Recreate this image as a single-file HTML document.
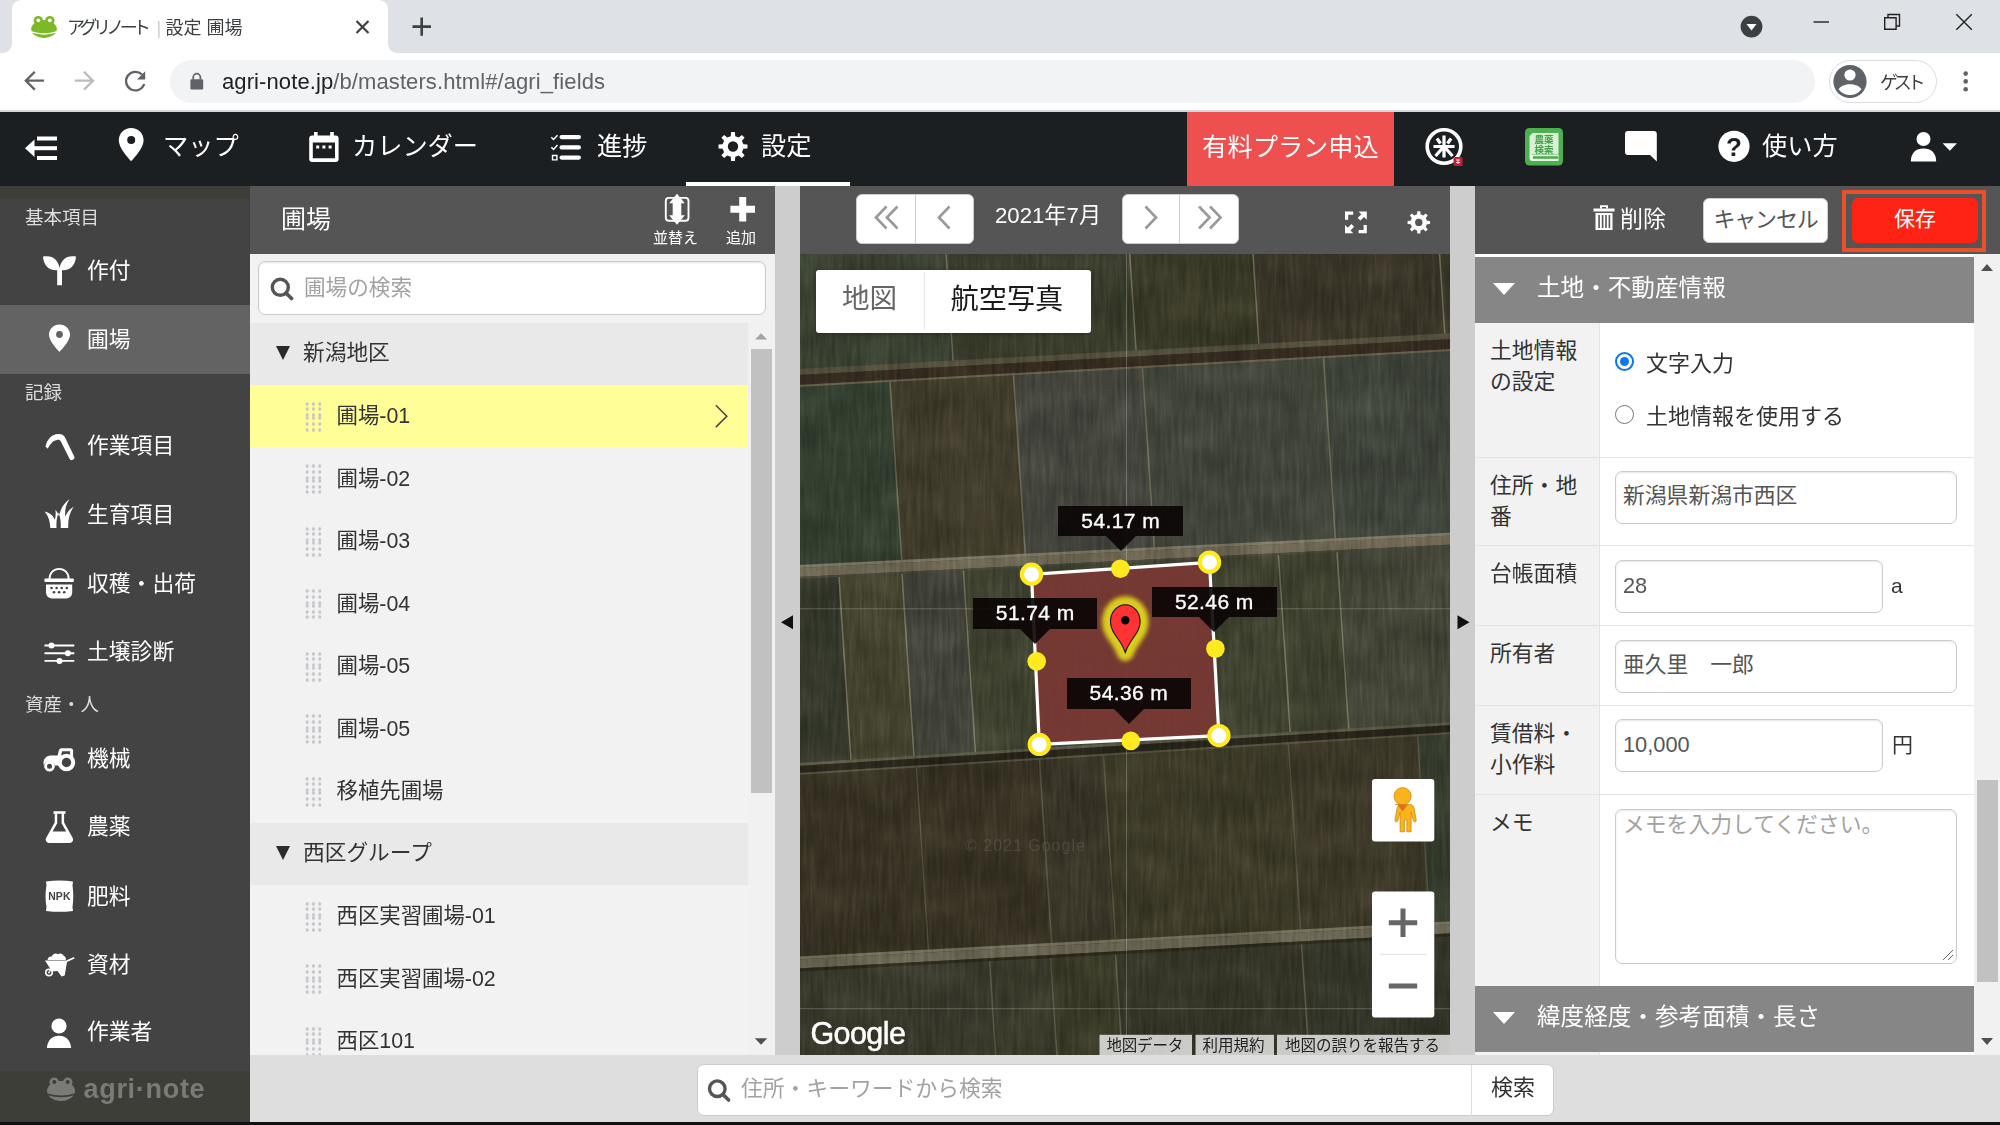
<!DOCTYPE html>
<html lang="ja">
<head>
<meta charset="utf-8">
<title>アグリノート | 設定 圃場</title>
<style>
*{box-sizing:border-box;margin:0;padding:0}
html,body{width:2000px;height:1125px;overflow:hidden;background:#fff}
body{font-family:"Liberation Sans","Noto Sans CJK JP",sans-serif;color:#333;position:relative}
.abs{position:absolute}
svg{display:block}
/* ---------- browser chrome ---------- */
#tabstrip{left:0;top:0;width:2000px;height:53px;background:#dee1e6}
#tab{left:12px;top:0;width:376px;height:53px;background:#fff;border-radius:9px 9px 0 0}
#tab:before,#tab:after{content:"";position:absolute;bottom:0;width:9px;height:9px;background:radial-gradient(circle at 0 0,transparent 8.5px,#fff 9px)}
#tab:before{left:-9px}
#tab:after{right:-9px;transform:scaleX(-1)}
#tabtitle{left:67px;top:14px;font-size:18px;color:#3c4043;white-space:nowrap;line-height:28px}
#toolbar{left:0;top:53px;width:2000px;height:57px;background:#fff}
#tbline{left:0;top:110px;width:2000px;height:2px;background:#d6d8db}
#omni{left:170px;top:60px;width:1645px;height:43px;border-radius:22px;background:#f1f3f4}
#url{left:222px;top:69px;font-size:22px;color:#5f6368;white-space:nowrap;letter-spacing:0.1px}
#url b{font-weight:normal;color:#202124}
#guest{left:1829px;top:60px;width:108px;height:43px;border-radius:22px;border:1px solid #dadce0;background:#fff}
#guest span{position:absolute;left:50px;top:8px;font-size:18px;color:#3c4043;letter-spacing:-4.3px;white-space:nowrap;line-height:28px}
/* ---------- app nav ---------- */
#nav{left:0;top:112px;width:2000px;height:74px;background:#1c1f22;color:#fff}
.navt{position:absolute;top:15px;font-size:25.2px;color:#fff;white-space:nowrap;line-height:38px}
#paid{left:1187px;top:112px;width:207px;height:74px;background:#ee504f;color:#fff;font-size:25.2px;line-height:70px;text-align:center;white-space:nowrap}
#navul{left:686px;top:182px;width:164px;height:4px;background:#fff}
/* ---------- sidebar ---------- */
#side{left:0;top:186px;width:250px;height:936.500px;background:#434343;color:#fff}
#sidetop{left:0;top:0;width:250px;height:13px;background:#3c3e37}
.sh{position:absolute;left:25px;margin-top:1px;font-size:18.500px;color:#ddd;white-space:nowrap;line-height:24px}
.si{position:absolute;left:87px;margin-top:1.500px;font-size:21.800px;color:#fff;white-space:nowrap;line-height:30px}
#sideact{left:0;top:119px;width:250px;height:69px;background:#636363}
#sidebot{left:0;top:885px;width:250px;height:52px;background:#3c3e37}
#logo{left:83.500px;top:887.500px;font-size:27px;font-weight:bold;color:#7a7b76;letter-spacing:.7px;white-space:nowrap}
/* ---------- list panel ---------- */
#list{left:250px;top:186px;width:525px;height:869px;background:#f2f2f2}
#listhd{left:0;top:0;width:525px;height:68px;background:#555}
#listhd .t{position:absolute;left:31px;top:16px;font-size:25px;color:#fff;line-height:34px}
.hbtn{position:absolute;font-size:15px;color:#fff;white-space:nowrap;line-height:18px}
#fsearch{left:8px;top:75px;width:508px;height:54px;border:1px solid #ccc;border-radius:7px;background:#fff;box-shadow:inset 0 1px 2px rgba(0,0,0,.1)}
#fsearch span{position:absolute;left:45px;top:11px;font-size:21.600px;color:#a2a2a2;line-height:30px}
.grp{position:absolute;left:0;width:498px;height:62px;background:#e9e9e9}
.grp span{position:absolute;left:53px;top:15.500px;font-size:21.700px;color:#333;line-height:30px;white-space:nowrap}
.grp i{position:absolute;left:26px;top:23.500px;width:0;height:0;border-left:7.300px solid transparent;border-right:7.300px solid transparent;border-top:14px solid #2b2b2b}
.it{position:absolute;left:0;width:498px;height:62px}
.it span{position:absolute;left:86.500px;top:16px;font-size:21.400px;color:#333;line-height:30px;white-space:nowrap}
.it i{position:absolute;left:53.600px;top:15.600px;width:18.900px;height:32px;background-image:radial-gradient(circle,#c6c6cc 1.500px,transparent 1.900px),radial-gradient(circle,#c6c6cc 1.500px,transparent 1.900px),radial-gradient(circle,#c6c6cc 1.500px,transparent 1.900px),radial-gradient(circle,#c6c6cc 1.500px,transparent 1.900px),radial-gradient(circle,#c6c6cc 1.500px,transparent 1.900px),radial-gradient(circle,#c6c6cc 1.500px,transparent 1.900px);background-size:6.300px 5.600px;background-repeat:repeat-x;background-position:0 0.0px,0 5.6px,0 11.2px,0 14.6px,0 20.4px,0 26.0px}
.it.sel{background:#fffe97}
#lsb{left:498px;top:136px;width:26.500px;height:733px;background:#f1f1f1}
#lsbthumb{left:2.500px;top:27px;width:21px;height:443.500px;background:#c1c1c1}
/* ---------- splitters ---------- */
.split{background:#cdcdcd}
/* ---------- map ---------- */
#maphd{left:800px;top:186px;width:650px;height:68px;background:#555}
.pg{position:absolute;top:8px;height:49.500px;background:#fff;border-radius:6px;border:1px solid #ccc}
#map{left:800px;top:254px;width:650px;height:801px;background:#3d3d2c;overflow:hidden}
.lbl{position:absolute;height:30.600px;background:rgba(10,4,4,.9);color:#fff;font-size:21px;letter-spacing:.4px;line-height:30px;text-align:center;white-space:nowrap;font-family:"Liberation Sans",sans-serif;-webkit-text-stroke:.35px #fff}
.lbl:after{content:"";position:absolute;top:30.600px;left:47.300px;border-left:15px solid transparent;border-right:15px solid transparent;border-top:15px solid rgba(10,4,4,.9)}
/* ---------- right panel ---------- */
#rp{left:1475px;top:186px;width:525px;height:869px;background:#fff}
#rphd{left:0;top:0;width:525px;height:68px;background:#555}
.sec{position:absolute;left:0;width:499px;height:62px;background:#868686;color:#fff;font-size:23.6px;line-height:62px;white-space:nowrap}
.sec span{position:absolute;left:62px;top:0}
.sec i{position:absolute;left:18px;top:26px;width:0;height:0;border-left:11px solid transparent;border-right:11px solid transparent;border-top:12px solid #fff}
.row{position:absolute;left:0;width:499px;border-bottom:1px solid #e3e3e3;background:#fff}
.row .l{position:absolute;left:0;top:0;bottom:0;width:125px;background:#f2f2f2;border-right:1px solid #e3e3e3;font-size:21.8px;line-height:31px;color:#333;padding:12px 0 0 15px}
.inp{position:absolute;left:140px;height:53px;border:1px solid #ccc;border-radius:7px;background:#fff;box-shadow:inset 0 1px 2px rgba(0,0,0,.1);font-size:21.8px;line-height:47px;padding-left:7px;color:#555;white-space:nowrap}
.unit{position:absolute;font-size:21px;color:#333;line-height:30px}
#rsb{left:499px;top:68px;width:26px;height:801px;background:#f1f1f1}
/* ---------- bottom ---------- */
#bottom{left:250px;top:1055px;width:1750px;height:67.500px;background:#dedede}
#black{left:0;top:1122.300px;width:2000px;height:3px;background:#111}
#bsearch{left:697px;top:1064px;width:857px;height:52px;background:#fff;border:1px solid #ccc;border-radius:7px}
</style>
</head>
<body>
<!-- CHROME -->
<div id="tabstrip" class="abs"></div>
<div id="tab" class="abs"></div>
<div id="tabtitle" class="abs"><span style="letter-spacing:-4.6px">アグリノート</span><span style="color:#a9a; display:inline-block;width:14px;text-align:center;margin-left:5px;transform:scaleX(.5)">|</span>設定 圃場</div>
<div id="toolbar" class="abs"></div>
<div id="tbline" class="abs"></div>
<div id="omni" class="abs"></div>
<div id="url" class="abs"><b>agri-note.jp</b>/b/masters.html#/agri_fields</div>
<div id="guest" class="abs"><span>ゲスト</span></div>

<svg class="abs" style="left:0;top:0" width="2000" height="112" viewBox="0 0 2000 112">
<!-- frog favicon -->
<g fill="#7bb929"><circle cx="38.3" cy="20.6" r="4.7"/><circle cx="49.8" cy="20.6" r="4.7"/><ellipse cx="44" cy="29" rx="12.8" ry="9"/></g>
<circle cx="38.3" cy="20.3" r="1.9" fill="#fff"/><circle cx="49.8" cy="20.3" r="1.9" fill="#fff"/>
<path d="M31.6 31.2 Q44 35.4 56.4 31.2 L56.6 32.6 Q44 36.8 31.4 32.6Z" fill="#fff"/>
<!-- tab close / new tab -->
<path d="M356.5 21l12 12M368.5 21l-12 12" stroke="#3c4043" stroke-width="2.2" fill="none"/>
<path d="M412.5 26.6h18.5M421.7 17.5v18.3" stroke="#3c4043" stroke-width="2.6" fill="none"/>
<!-- window controls -->
<circle cx="1751.5" cy="26.6" r="10.9" fill="#3c4043"/><path d="M1746.5 24h10l-5 6.5z" fill="#fff"/>
<path d="M1813.5 22h15.5" stroke="#222" stroke-width="1.4"/>
<path d="M1884.7 17.8h11.4v11.4h-11.4zM1888 17.5v-3h11.5v11.5h-3" stroke="#222" stroke-width="1.4" fill="none"/>
<path d="M1956.3 14.3l15.5 15.5M1971.8 14.3l-15.5 15.5" stroke="#222" stroke-width="1.4" fill="none"/>
<!-- back / forward / reload -->
<path d="M44 80.7H26.5M34.8 71.8l-9 8.9 9 8.9" stroke="#5f6368" stroke-width="2.3" fill="none"/>
<path d="M74.8 80.7h17.5M84 71.8l9 8.9-9 8.9" stroke="#b9bbbe" stroke-width="2.3" fill="none"/>
<path d="M141.8 74.4a9.3 9.3 0 1 0 2.4 9.6" stroke="#5f6368" stroke-width="2.3" fill="none"/><path d="M145.2 71.3v8.2h-8.2z" fill="#5f6368"/>
<!-- lock -->
<rect x="190.4" y="79.3" width="12.8" height="10.2" rx="1.3" fill="#5f6368"/><path d="M193.2 79.5v-2.2a3.6 3.6 0 0 1 7.2 0v2.2" stroke="#5f6368" stroke-width="1.7" fill="none"/>
<!-- avatar -->
<circle cx="1850" cy="81.5" r="16.6" fill="#5f6368"/><circle cx="1850" cy="75" r="5.6" fill="#fff"/><path d="M1838.6 89.2c2.2-3.6 7-5 11.4-5s9.2 1.4 11.4 5a14 14 0 0 1-22.8 0z" fill="#fff"/>
<!-- menu dots -->
<g fill="#5f6368"><circle cx="1965.7" cy="73.6" r="2.3"/><circle cx="1965.7" cy="81.4" r="2.3"/><circle cx="1965.7" cy="89.2" r="2.3"/></g>
</svg>

<!-- NAV -->
<div id="nav" class="abs">
<div class="navt" style="left:163px">マップ</div>
<div class="navt" style="left:352px">カレンダー</div>
<div class="navt" style="left:597px">進捗</div>
<div class="navt" style="left:761px">設定</div>
<div class="navt" style="left:1762px">使い方</div>
</div>
<div id="paid" class="abs">有料プラン申込</div>
<div id="navul" class="abs"></div>

<svg class="abs" style="left:0;top:112px" width="2000" height="74" viewBox="0 112 2000 74">
<g fill="#fff">
<!-- menu collapse -->
<rect x="37" y="136.5" width="20" height="4"/><rect x="32" y="146.2" width="25" height="4"/><rect x="37" y="156" width="20" height="4"/><path d="M25 148.2l9.5-8.7v17.4z"/>
<!-- pin -->
<path d="M131.2 128c-6.9 0-12.4 5.4-12.4 12.2 0 8.6 12.4 21 12.4 21s12.4-12.4 12.4-21c0-6.800-5.500-12.200-12.400-12.200zm0 8a4 4 0 1 1 0 8 4 4 0 0 1 0-8z" fill-rule="evenodd"/>
<!-- calendar -->
<path d="M314 132h3.600v3.500h12.600v-3.500h3.600v3.500h1.800a3 3 0 0 1 3 3v20.500a3 3 0 0 1-3 3h-23.400a3 3 0 0 1-3-3v-20.500a3 3 0 0 1 3-3h1.800zM312.800 142.500v15.800h22.200v-15.800zM316.200 145.600h3v3h-3zM322.400 145.600h3v3h-3zM328.600 145.600h3v3h-3z" fill-rule="evenodd"/>
<!-- tasks -->
<rect x="559.500" y="135" width="21.500" height="4.200" rx="2.100"/><rect x="559.500" y="145.300" width="21.500" height="4.200" rx="2.100"/><rect x="559.500" y="155.500" width="21.500" height="4.200" rx="2.100"/>
<path d="M551.800 154.800h5.800v5.800h-5.800zM553.200 156.200v3h3v-3z" fill-rule="evenodd"/>
</g>
<path d="M551.300 137.300l2.200 2.200 4-4.300M551.300 147.200l2.200 2.200 4-4.300" stroke="#fff" stroke-width="1.500" fill="none"/>
<!-- gear -->
<path d="M747.47 144.56 L747.47 148.44 L743.36 148.73 L741.90 152.25 L744.61 155.36 L741.86 158.11 L738.75 155.40 L735.23 156.86 L734.94 160.97 L731.06 160.97 L730.77 156.86 L727.25 155.40 L724.14 158.11 L721.39 155.36 L724.10 152.25 L722.64 148.73 L718.53 148.44 L718.53 144.56 L722.64 144.27 L724.10 140.75 L721.39 137.64 L724.14 134.89 L727.25 137.60 L730.77 136.14 L731.06 132.03 L734.94 132.03 L735.23 136.14 L738.75 137.60 L741.86 134.89 L744.61 137.64 L741.90 140.75 L743.36 144.27Z M727.80 146.50 a5.20 5.20 0 1 0 10.40 0 a5.20 5.20 0 1 0 -10.40 0Z" fill="#fff" fill-rule="evenodd"/>
<!-- rice -->
<circle cx="1444" cy="146.500" r="16.800" fill="none" stroke="#fff" stroke-width="3.600"/>
<g stroke="#fff" stroke-width="3.200" fill="none"><path d="M1444 135.500v22M1433.500 146.500h21M1437 138.500l3.500 5M1451 138.500l-3.500 5M1443 147.500l-7.500 8.500M1445 147.500l7.500 8.500"/></g>
<rect x="1453.500" y="157" width="9" height="9" rx="1.500" fill="#c6202e"/><path d="M1456 160h4M1456 162.500h4M1458 159v5" stroke="#fff" stroke-width=".8"/>
<!-- book -->
<rect x="1525" y="128" width="38" height="37.500" rx="4.500" fill="#4caf50"/>
<path d="M1532.500 133h26v21h-26l-3 3v-21z" fill="#d9f0d5"/><path d="M1529.500 157.500a3 3 0 0 1 3-3h26v6.500h-26a3 3 0 0 1-3-3z" fill="#e8f6e5"/><rect x="1533" y="156.200" width="25" height="2.600" fill="#4caf50"/>
<!-- chat -->
<path d="M1628 131h25.800a3 3 0 0 1 3 3v27.600l-6.800-6.600h-22a3 3 0 0 1-3-3v-18a3 3 0 0 1 3-3z" fill="#fff"/>
<!-- help -->
<circle cx="1734" cy="146.300" r="15.600" fill="#fff"/>
<!-- user -->
<circle cx="1923.500" cy="139" r="7" fill="#fff"/><path d="M1910.800 161.500c0-8.500 5-13 12.700-13s12.700 4.500 12.700 13z" fill="#fff"/><path d="M1942.600 143.200h14.400l-7.200 7.600z" fill="#fff"/>
<text x="1544" y="143.300" font-family="Liberation Sans,Noto Sans CJK JP,sans-serif" font-size="9.500" font-weight="bold" fill="#3fa045" text-anchor="middle">農薬</text>
<text x="1544" y="152.800" font-family="Liberation Sans,Noto Sans CJK JP,sans-serif" font-size="9.500" font-weight="bold" fill="#3fa045" text-anchor="middle">検索</text>
<text x="1734" y="155.500" font-family="Liberation Sans,sans-serif" font-size="26" font-weight="bold" fill="#1c1f22" text-anchor="middle">?</text>
</svg>

<!-- SIDEBAR -->
<div id="side" class="abs">
<div id="sidetop" class="abs"></div>
<div id="sideact" class="abs"></div>
<div class="sh" style="top:19px">基本項目</div>
<div class="si" style="top:68px">作付</div>
<div class="si" style="top:137px">圃場</div>
<div class="sh" style="top:194px">記録</div>
<div class="si" style="top:243px">作業項目</div>
<div class="si" style="top:312px">生育項目</div>
<div class="si" style="top:381px">収穫・出荷</div>
<div class="si" style="top:449px">土壌診断</div>
<div class="sh" style="top:506px">資産・人</div>
<div class="si" style="top:556px">機械</div>
<div class="si" style="top:624px">農薬</div>
<div class="si" style="top:694px">肥料</div>
<div class="si" style="top:762px">資材</div>
<div class="si" style="top:829.500px">作業者</div>
<div id="sidebot" class="abs"></div>
<div id="logo" class="abs">agri·note</div>

<svg class="abs" style="left:0;top:0" width="250" height="935" viewBox="0 186 250 935">
<g fill="#fff">
<!-- sprout -->
<path d="M43 256.500c9.500-1.800 15.200 3.200 16.600 11.500 1.400-8.300 7.100-13.300 16.400-11.500-0.500 9.800-7 14.200-14 13.800v15h-4.800v-15c-7.200 0.400-13.700-4-14.200-13.800z"/>
<!-- pin -->
<path d="M59.500 324.400c-5.800 0-10.500 4.500-10.500 10.200 0 7.200 10.500 17.300 10.500 17.300s10.500-10.100 10.500-17.300c0-5.700-4.700-10.200-10.500-10.200zm0 6.700a3.400 3.400 0 1 1 0 6.800 3.400 3.400 0 0 1 0-6.800z" fill-rule="evenodd"/>
<!-- grass -->
<path d="M44.500 511.500c3.500 4 5.500 9 5.800 16.500h6.200c-0.300-5.500 0.200-11 2.200-15.500 1.700 4.800 2.300 9.800 2 15.500h7.600c-0.600-8.500 1.500-16 5.600-21.500-4.200 2.600-7 6-8.600 10.200-0.700-6.500 0.700-12.500 4.400-17.700-6 4.300-9.500 10.200-10.600 17.500-0.900-2.700-2.100-4.900-3.700-6.700 0.500 3.500 0.300 6.800-0.500 9.900-1.900-4.200-5-7-10.400-8.200z"/>
<!-- person -->
<circle cx="59" cy="1026" r="7.600"/><path d="M46.800 1048c0.800-8 5.600-12.200 12.200-12.200s11.400 4.200 12.200 12.200z"/>
</g>
<!-- sickle -->
<path d="M45.500 446.500C47 438 54 432.300 61 434.300c2.200.600 3.500 2 4.400 4l8.700 18a2.600 2.600 0 0 1-4.700 2.300L61 441.800c-.800-1.600-2.200-2.200-4-1.900-4.500.800-7.300 4.600-9.200 8.800z" fill="#fff"/>
<!-- basket -->
<path d="M49.500 579c0-6 4.200-10.200 9.600-10.200s9.600 4.200 9.600 10.200" stroke="#fff" stroke-width="1.800" fill="none"/>
<rect x="44.400" y="578.600" width="29.400" height="3.400" rx="1" fill="#fff"/>
<path d="M46 584.500h26.200v8a6 6 0 0 1-6 6h-14.200a6 6 0 0 1-6-6z" fill="#fff"/>
<g fill="#434343"><circle cx="51.500" cy="588" r="1.300"/><circle cx="56.600" cy="588" r="1.300"/><circle cx="61.700" cy="588" r="1.300"/><circle cx="66.800" cy="588" r="1.300"/><circle cx="54" cy="592.300" r="1.300"/><circle cx="59.100" cy="592.300" r="1.300"/><circle cx="64.200" cy="592.300" r="1.300"/></g>
<!-- sliders -->
<g stroke="#fff" stroke-width="1.900"><path d="M44.500 645.500h29.800M44.500 653.300h29.800M44.500 660.900h29.800"/></g>
<g fill="#fff"><circle cx="51.500" cy="645.500" r="3"/><circle cx="67.800" cy="653.300" r="3"/><circle cx="59.500" cy="660.900" r="3"/></g>
<!-- tractor -->
<g fill="#fff"><path d="M55 765.500l4-15.500a2.500 2.500 0 0 1 2.400-1.800h9.200a2.500 2.500 0 0 1 2.500 2.500v5.500h-3v-5h-8l-1.800 7.300z"/><path d="M43.500 763c0-5 3.500-7.500 8-7.500h12v10h-8.500a6 6 0 0 0-11.300 0z"/><circle cx="49.500" cy="766.300" r="5.300"/><circle cx="66.500" cy="762.500" r="8.700"/></g>
<circle cx="49.500" cy="766.300" r="2.500" fill="#434343"/><circle cx="66.500" cy="762.500" r="4.700" fill="#434343"/>
<!-- flask -->
<path d="M53.500 811.200h12v2.600h-1.400v8.700l8.600 15.500a3.300 3.300 0 0 1-2.900 4.900h-20.800a3.300 3.300 0 0 1-2.900-4.900l8.600-15.500v-8.700h-1.200zM57.200 813.800v9.400l-4.600 8.300h13.600l-4.600-8.300v-9.400z" fill="#fff" fill-rule="evenodd"/>
<!-- NPK bag -->
<path d="M46 881.500q13.500-2.200 27 0l-0.500 3.700c1 7 1 15 0 22l0.500 3.700q-13.500 1.800-27 0l0.500-3.700c-1.300-7-1.300-15 0-22z" fill="#fff"/>
<text x="59.400" y="900" font-family="Liberation Sans,sans-serif" font-size="10.400" font-weight="bold" fill="#434343" text-anchor="middle" letter-spacing="0.100">NPK</text>
<!-- wheelbarrow -->
<g fill="#fff"><path d="M45 960.500h21l8-3.500 0.600 1.500-7.600 3.600-2.300 13.500-3.200 0.900-4-5.500-5.500 0.500z"/><path d="M47.500 960c0.500-3 2.500-4 4.300-3.500 1-2.800 4-3.800 6.200-2.300 2-1.500 5-0.800 5.800 1.800 1.700 0.500 2.400 2 2 4z"/><circle cx="49" cy="972.500" r="4"/></g>
<circle cx="49" cy="972.500" r="2.400" fill="#434343"/><circle cx="49" cy="972.500" r="1" fill="#fff"/>
<path d="M52 967.500l-2.500 4" stroke="#fff" stroke-width="1.600"/>
<!-- logo frog -->
<g fill="#7a7b76"><circle cx="54.300" cy="1082.300" r="4.800"/><circle cx="67.700" cy="1082.300" r="4.800"/><ellipse cx="61" cy="1091" rx="14" ry="10"/></g>
<circle cx="54.300" cy="1082" r="2" fill="#3c3e37"/><circle cx="67.700" cy="1082" r="2" fill="#3c3e37"/>
<path d="M47.200 1093.300q13.800 4.400 27.600 0l0.200 1.600q-14 4.600-28 0z" fill="#3c3e37"/>
</svg>

</div>
<!-- LIST -->
<div id="list" class="abs">
<div id="listhd" class="abs"><div class="t">圃場</div>
<div class="hbtn" style="left:403px;top:43px">並替え</div>
<div class="hbtn" style="left:476px;top:43px">追加</div>
<svg class="abs" style="left:0;top:0" width="525" height="68" viewBox="250 186 525 68">
<rect x="665.800" y="197.900" width="22.700" height="22.900" rx="3" fill="none" stroke="#fff" stroke-width="1.900"/>
<path d="M677 193.800l7.800 9.500h-3.500v12h3.500l-7.800 9.500-7.800-9.500h3.500v-12h-3.500z" fill="#fff"/>
<path d="M739.200 197h7v8.800h8.800v7h-8.800v8.800h-7v-8.800h-8.800v-7h8.800z" fill="#fff"/>
</svg>
</div>
<div id="fsearch" class="abs"><span>圃場の検索</span></div>
<div class="grp" style="top:136.8px;height:62.500px"><i></i><span>新潟地区</span></div>
<div class="it sel" style="top:199.3px;height:62.500px"><i></i><span>圃場-01</span></div>
<div class="it" style="top:261.8px;height:62.500px"><i></i><span>圃場-02</span></div>
<div class="it" style="top:324.3px;height:62.500px"><i></i><span>圃場-03</span></div>
<div class="it" style="top:386.8px;height:62.500px"><i></i><span>圃場-04</span></div>
<div class="it" style="top:449.3px;height:62.500px"><i></i><span>圃場-05</span></div>
<div class="it" style="top:511.8px;height:62.500px"><i></i><span>圃場-05</span></div>
<div class="it" style="top:574.3px;height:62.500px"><i></i><span>移植先圃場</span></div>
<div class="grp" style="top:636.8px;height:62.500px"><i></i><span>西区グループ</span></div>
<div class="it" style="top:699.3px;height:62.500px"><i></i><span>西区実習圃場-01</span></div>
<div class="it" style="top:761.8px;height:62.500px"><i></i><span>西区実習圃場-02</span></div>
<div class="it" style="top:824.3px;height:44.7px"><i></i><span>西区101</span></div>
<div id="lsb" class="abs"><div id="lsbthumb" class="abs"></div></div>
<svg class="abs" style="left:0;top:0" width="525" height="869" viewBox="250 186 525 869">
<circle cx="280.300" cy="287.300" r="8" fill="none" stroke="#555" stroke-width="3.400"/><path d="M286 293l5.600 5.600" stroke="#555" stroke-width="3.600" stroke-linecap="round"/>
<path d="M715.800 405.300l11 10.900-11 10.900" fill="none" stroke="#444" stroke-width="1.500"/>
<path d="M755 339.600l6.100-6.300 6.100 6.300z" fill="#a3a3a3"/>
<path d="M754.800 1038.200h12.400l-6.200 6.600z" fill="#505050"/>
</svg>
</div>
<!-- SPLITTERS -->
<div class="abs split" style="left:775px;top:186px;width:25px;height:869px"></div>
<div class="abs split" style="left:1450px;top:186px;width:25px;height:869px"></div>
<svg id="splitarrows" class="abs" style="left:775px;top:600px" width="700" height="44" viewBox="775 600 700 44"><path d="M781 622.300l12-7v14z" fill="#111"/><path d="M1469.500 622.300l-12-7v14z" fill="#111"/></svg>
<!-- MAP -->
<div id="maphd" class="abs">
<div class="pg" style="left:56px;width:118px"></div>
<div class="pg" style="left:322px;width:117px"></div>
<div class="abs" style="left:195px;top:15px;font-size:22.200px;color:#fff;line-height:30px;white-space:nowrap">2021年7月</div>
<svg class="abs" style="left:0;top:0" width="650" height="68" viewBox="800 186 650 68">
<g fill="none" stroke="#999" stroke-width="2.600"><path d="M886.500 206.500l-10.600 11 10.600 11M897.500 206.500l-10.600 11 10.600 11M949.500 206.500l-10.600 11 10.600 11M1145.500 206.500l10.600 11-10.600 11M1199 206.500l10.600 11-10.600 11M1210 206.500l10.600 11-10.600 11"/></g>
<path d="M915.500 195v48M1179.500 195v48" stroke="#ccc" stroke-width="1"/>
<g fill="#fff"><path d="M1345 211.500h8.200v3.200h-5v5h-3.200zM1366.800 233.200h-8.200v-3.200h5v-5h3.200zM1358.500 211.500h8.300v8.300l-2.800-2.800-3.600 3.600-2.700-2.700 3.600-3.600zM1353.300 233.200h-8.300v-8.300l2.800 2.800 3.600-3.600 2.700 2.700-3.600 3.600z"/>
<path d="M1430.00 220.90 L1430.00 223.90 L1426.91 224.15 L1425.77 226.90 L1427.78 229.26 L1425.66 231.38 L1423.30 229.37 L1420.55 230.51 L1420.30 233.60 L1417.30 233.60 L1417.05 230.51 L1414.30 229.37 L1411.94 231.38 L1409.82 229.26 L1411.83 226.90 L1410.69 224.15 L1407.60 223.90 L1407.60 220.90 L1410.69 220.65 L1411.83 217.90 L1409.82 215.54 L1411.94 213.42 L1414.30 215.43 L1417.05 214.29 L1417.30 211.20 L1420.30 211.20 L1420.55 214.29 L1423.30 215.43 L1425.66 213.42 L1427.78 215.54 L1425.77 217.90 L1426.91 220.65Z M1415.10 222.40 a3.70 3.70 0 1 0 7.40 0 a3.70 3.70 0 1 0 -7.40 0Z" fill-rule="evenodd"/></g>
</svg>
</div>
<div id="map" class="abs">
<svg class="abs" style="left:0;top:0" width="650" height="801" viewBox="0 0 650 801"><defs><filter id="tex" x="0" y="0" width="100%" height="100%" color-interpolation-filters="sRGB"><feTurbulence type="fractalNoise" baseFrequency="0.28 0.022" numOctaves="3" seed="7"/><feColorMatrix type="matrix" values="0.9 0 0 0 -0.02  0.9 0 0 0 -0.02  0.9 0 0 0 -0.02  0 0 0 0 1"/></filter><filter id="tex2" x="0" y="0" width="100%" height="100%" color-interpolation-filters="sRGB"><feTurbulence type="fractalNoise" baseFrequency="0.02 0.03" numOctaves="2" seed="11"/><feColorMatrix type="matrix" values="0.9 0 0 0 -0.02  0.9 0 0 0 -0.02  0.9 0 0 0 -0.02  0 0 0 0 1"/></filter><filter id="soft"><feGaussianBlur stdDeviation="0.7"/></filter></defs><g filter="url(#soft)"><polygon points="-40.0,-5.0 145.7,-5.0 153.8,117.5 -40.0,128.2" fill="#3d4536"/><polygon points="145.7,-5.0 329.4,-5.0 336.8,107.3 153.8,117.5" fill="#3d402d"/><polygon points="329.4,-5.0 452.7,-5.0 459.6,100.5 336.8,107.3" fill="#3d3e2b"/><polygon points="452.7,-5.0 639.2,-5.0 645.5,90.2 459.6,100.5" fill="#3e382a"/><polygon points="639.2,-5.0 690.0,-5.0 690.0,87.8 645.5,90.2" fill="#3d3a2b"/><polygon points="-40.0,128.2 89.5,121.0 102.2,312.9 -40.0,320.0" fill="#354233"/><polygon points="89.5,121.0 213.0,114.2 225.7,306.7 102.2,312.9" fill="#45402f"/><polygon points="213.0,114.2 342.0,107.1 354.8,300.3 225.7,306.7" fill="#474a3f"/><polygon points="342.0,107.1 523.0,97.0 535.8,291.2 354.8,300.3" fill="#45493d"/><polygon points="523.0,97.0 690.0,87.8 690.0,283.5 535.8,291.2" fill="#43473d"/><polygon points="-40.0,320.0 38.5,316.1 51.3,510.8 -40.0,516.5" fill="#383b2d"/><polygon points="38.5,316.1 101.5,312.9 114.3,506.8 51.3,510.8" fill="#464632"/><polygon points="101.5,312.9 163.0,309.9 175.7,502.9 114.3,506.8" fill="#45473d"/><polygon points="163.0,309.9 478.0,294.1 490.5,483.1 175.7,502.9" fill="#424430"/><polygon points="478.0,294.1 536.5,291.2 548.9,479.4 490.5,483.1" fill="#424431"/><polygon points="536.5,291.2 690.0,283.5 690.0,470.5 548.9,479.4" fill="#46483b"/><polygon points="-40.0,516.5 116.0,506.7 128.9,702.5 -40.0,711.7" fill="#3a3425"/><polygon points="116.0,506.7 239.0,498.9 252.0,695.9 128.9,702.5" fill="#3b3526"/><polygon points="239.0,498.9 303.0,494.9 316.0,692.4 252.0,695.9" fill="#3d3929"/><polygon points="303.0,494.9 488.0,483.3 501.1,682.4 316.0,692.4" fill="#3f3e2b"/><polygon points="488.0,483.3 617.0,475.1 630.2,675.5 501.1,682.4" fill="#3f3a2b"/><polygon points="617.0,475.1 690.0,470.5 690.0,672.2 630.2,675.5" fill="#3b4332"/><polygon points="-40.0,711.7 189.0,699.3 196.0,806.0 -40.0,806.0" fill="#3a3a2d"/><polygon points="189.0,699.3 250.0,696.0 257.3,806.0 196.0,806.0" fill="#3e3e2e"/><polygon points="250.0,696.0 315.0,692.5 322.5,806.0 257.3,806.0" fill="#3c3c2c"/><polygon points="315.0,692.5 501.0,682.4 509.2,806.0 322.5,806.0" fill="#38382c"/><polygon points="501.0,682.4 690.0,672.2 690.0,806.0 509.2,806.0" fill="#36372b"/><line x1="145.7" y1="-5.0" x2="153.8" y2="117.5" stroke="#85826c" stroke-width="1.5" opacity="0.75"/><line x1="329.4" y1="-5.0" x2="336.8" y2="107.3" stroke="#85826c" stroke-width="1.5" opacity="0.75"/><line x1="452.7" y1="-5.0" x2="459.6" y2="100.5" stroke="#85826c" stroke-width="1.5" opacity="0.75"/><line x1="639.2" y1="-5.0" x2="645.5" y2="90.2" stroke="#85826c" stroke-width="1.5" opacity="0.75"/><line x1="89.5" y1="121.0" x2="102.2" y2="312.9" stroke="#85826c" stroke-width="1.5" opacity="0.7"/><line x1="213.0" y1="114.2" x2="225.7" y2="306.7" stroke="#85826c" stroke-width="1.5" opacity="0.7"/><line x1="342.0" y1="107.1" x2="354.8" y2="300.3" stroke="#85826c" stroke-width="1.5" opacity="0.7"/><line x1="523.0" y1="97.0" x2="535.8" y2="291.2" stroke="#85826c" stroke-width="1.5" opacity="0.7"/><line x1="38.5" y1="316.1" x2="51.3" y2="510.8" stroke="#85826c" stroke-width="1.5" opacity="0.85"/><line x1="101.5" y1="312.9" x2="114.3" y2="506.8" stroke="#85826c" stroke-width="1.5" opacity="0.85"/><line x1="163.0" y1="309.9" x2="175.7" y2="502.9" stroke="#85826c" stroke-width="1.5" opacity="0.85"/><line x1="478.0" y1="294.1" x2="490.5" y2="483.1" stroke="#85826c" stroke-width="1.5" opacity="0.85"/><line x1="536.5" y1="291.2" x2="548.9" y2="479.4" stroke="#85826c" stroke-width="1.5" opacity="0.85"/><line x1="116.0" y1="506.7" x2="128.9" y2="702.5" stroke="#85826c" stroke-width="1.5" opacity="0.4"/><line x1="239.0" y1="498.9" x2="252.0" y2="695.9" stroke="#85826c" stroke-width="1.5" opacity="0.4"/><line x1="303.0" y1="494.9" x2="316.0" y2="692.4" stroke="#85826c" stroke-width="1.5" opacity="0.4"/><line x1="488.0" y1="483.3" x2="501.1" y2="682.4" stroke="#85826c" stroke-width="1.5" opacity="0.4"/><line x1="617.0" y1="475.1" x2="630.2" y2="675.5" stroke="#85826c" stroke-width="1.5" opacity="0.4"/><line x1="189.0" y1="699.3" x2="196.0" y2="806.0" stroke="#85826c" stroke-width="1.5" opacity="0.5"/><line x1="250.0" y1="696.0" x2="257.3" y2="806.0" stroke="#85826c" stroke-width="1.5" opacity="0.5"/><line x1="315.0" y1="692.5" x2="322.5" y2="806.0" stroke="#85826c" stroke-width="1.5" opacity="0.5"/><line x1="501.0" y1="682.4" x2="509.2" y2="806.0" stroke="#85826c" stroke-width="1.5" opacity="0.5"/><polygon points="-2.0,115.1 652.0,78.9 652.0,84.9 -2.0,121.1" fill="#56533f"/><polygon points="-2.0,121.1 652.0,84.9 652.0,94.9 -2.0,131.1" fill="#382f21"/><polygon points="-2.0,131.1 652.0,94.9 652.0,96.9 -2.0,133.1" fill="#6a6450"/><polygon points="-2.0,311.1 652.0,278.4 652.0,281.4 -2.0,314.1" fill="#7d7965"/><polygon points="-2.0,314.1 652.0,281.4 652.0,290.4 -2.0,323.1" fill="#6f6b57"/><polygon points="-2.0,323.1 652.0,290.4 652.0,292.4 -2.0,325.1" fill="#4b4a3a"/><polygon points="-2.0,509.1 652.0,467.9 652.0,470.9 -2.0,512.1" fill="#5d5c48"/><polygon points="-2.0,512.1 652.0,470.9 652.0,477.9 -2.0,519.1" fill="#2a271b"/><polygon points="-2.0,519.1 652.0,477.9 652.0,479.9 -2.0,521.1" fill="#55543f"/><polygon points="-2.0,702.6 652.0,667.3 652.0,670.3 -2.0,705.6" fill="#77735f"/><polygon points="-2.0,705.6 652.0,670.3 652.0,679.3 -2.0,714.6" fill="#6d6956"/><polygon points="-2.0,714.6 652.0,679.3 652.0,682.3 -2.0,717.6" fill="#2d2b1f"/></g><rect width="650" height="801" filter="url(#tex)" style="mix-blend-mode:soft-light" opacity=".3"/><rect width="650" height="801" filter="url(#tex2)" style="mix-blend-mode:soft-light" opacity=".25"/></svg><svg class="abs" style="left:0;top:0" width="650" height="801" viewBox="800 254 650 801">
<defs><filter id="glow" x="-50%" y="-50%" width="200%" height="200%"><feGaussianBlur stdDeviation="2.2"/></filter></defs>
<!-- tile seams -->
<path d="M1126.500 254v801M800 608.800h650M800 1008.700h650" stroke="#fff" stroke-opacity=".22" stroke-width="1" fill="none"/>
<!-- polygon -->
<polygon points="1031.500,574.300 1209.500,562.300 1218.900,735.600 1039.300,744.400" fill="#7b3734" fill-opacity=".9" stroke="#fff" stroke-width="3.200" stroke-linejoin="round"/>
<!-- handles -->
<g fill="#ffe91f"><circle cx="1120.300" cy="568.700" r="9.300"/><circle cx="1215.400" cy="648.700" r="9.300"/><circle cx="1130.800" cy="740.900" r="9.300"/><circle cx="1036.700" cy="661.400" r="9.300"/></g>
<g fill="#fff" stroke="#ffe91f" stroke-width="4.200"><circle cx="1031.500" cy="574.300" r="9.600"/><circle cx="1209.500" cy="562.300" r="9.600"/><circle cx="1218.900" cy="735.600" r="9.600"/><circle cx="1039.300" cy="744.400" r="9.600"/></g>
<!-- marker -->
<path id="pinp" d="M1125.300 652.500c-2.500-7.500-6.500-12.500-10-17.500-3-4.300-4.800-8.800-4.800-13.500 0-9 6.600-16.800 14.800-16.800s14.800 7.800 14.800 16.800c0 4.700-1.800 9.200-4.800 13.500-3.500 5-7.500 10-10 17.500z" fill="#e3d81a" stroke="#e0d51a" stroke-width="17" stroke-linejoin="round" filter="url(#glow)" opacity=".95"/>
<path d="M1125.300 652.500c-2.500-7.500-6.500-12.500-10-17.500-3-4.300-4.800-8.800-4.800-13.500 0-9 6.600-16.800 14.800-16.800s14.800 7.800 14.800 16.800c0 4.700-1.800 9.200-4.800 13.500-3.500 5-7.500 10-10 17.500z" fill="#ff3333" stroke="#111" stroke-width="1.100"/>
<circle cx="1125.300" cy="620.200" r="4.200" fill="#000"/>
<!-- pegman + zoom -->
<rect x="1372" y="779" width="62.300" height="62.600" rx="3" fill="#fff"/>
<rect x="1372" y="891.600" width="62.300" height="125.900" rx="3" fill="#fff"/>
<path d="M1380 954.400h47" stroke="#e6e6e6" stroke-width="1.200"/>
<path d="M1388.800 922.800h28.400M1403 908.600v28.400M1388.800 986h28.400" stroke="#666" stroke-width="5" fill="none"/>
<g><circle cx="1402.600" cy="796.200" r="8.600" fill="#fbb31a" stroke="#c98a1a" stroke-width=".8"/>
<path d="M1395.500 804.500h14.200c2.500 0 4 1.500 4.500 4l2 11.500c.3 2-2.200 2.600-2.800.8l-2.300-8.500v19.500h-4.300v-12h-2.400v12h-4.300v-19.500l-2.300 8.500c-.6 1.800-3.100 1.200-2.800-.8l2-11.500c.5-2.500 2-4 4.500-4z" fill="#fbb31a" stroke="#c98a1a" stroke-width=".8"/>
<path d="M1397.500 804.800h10.200l-5.100 6.700z" fill="#e0711c"/></g>
<!-- attribution -->
<g fill="#f5f5f5" fill-opacity=".78"><rect x="1099.500" y="1034.800" width="92.500" height="21"/><rect x="1195.500" y="1034.800" width="78.500" height="21"/><rect x="1277" y="1034.800" width="173" height="21"/></g>
<g font-family="Liberation Sans,Noto Sans CJK JP,sans-serif" font-size="15.500" fill="#222"><text x="1106.500" y="1050.500" letter-spacing="-.2">地図データ</text><text x="1202.500" y="1050.500">利用規約</text><text x="1285" y="1050.500">地図の誤りを報告する</text></g>
<text x="965" y="851" font-family="Liberation Sans,sans-serif" font-size="16" fill="#fff" fill-opacity=".1" letter-spacing="1">© 2021 Google</text>
<text x="810.500" y="1043.500" font-family="Liberation Sans,sans-serif" font-size="30.500" fill="#fff" letter-spacing="-.6" stroke="#fff" stroke-width=".5">Google</text>
</svg>
<div class="abs" style="left:15.500px;top:16px;width:275.500px;height:62.500px;background:#fff;border-radius:3px;box-shadow:0 1px 4px rgba(0,0,0,.3)"></div>
<div class="abs" style="left:124px;top:18px;width:1px;height:58px;background:#e6e6e6"></div>
<div class="abs" style="left:42px;top:25px;font-size:27.600px;line-height:40px;color:#666;white-space:nowrap">地図</div>
<div class="abs" style="left:150.500px;top:25px;font-size:28.200px;line-height:40px;color:#1a1a1a;white-space:nowrap">航空写真</div>
<div class="lbl" style="left:258.400px;top:251.800px;width:124.600px">54.17 m</div>
<div class="lbl" style="left:352px;top:332.700px;width:124.600px">52.46 m</div>
<div class="lbl" style="left:172.900px;top:344.200px;width:124.600px">51.74 m</div>
<div class="lbl" style="left:266.600px;top:424.300px;width:124.600px">54.36 m</div>

</div>
<!-- RIGHT PANEL -->
<div id="rp" class="abs">
<div id="rphd" class="abs"></div>

<div class="abs" style="left:118px;top:18px;width:22px;height:27px"><svg width="22" height="27" viewBox="0 0 22 27"><path d="M7 1.2h8v3.3h-2V3H9v1.5H7z" fill="#fff"/><rect x="0.5" y="4.5" width="21" height="3" fill="#fff"/><path d="M2.5 9h17v17h-17z M5.3 11v13h1.6V11z M8.8 11v13h1.6V11z M12.2 11v13h1.6V11z M15.6 11v13h1.6V11z" fill="#fff" fill-rule="evenodd"/></svg></div>
<div class="abs" style="left:145px;top:17px;font-size:23px;color:#fff;line-height:32px;white-space:nowrap">削除</div>
<div class="abs" style="left:228px;top:12px;width:125px;height:45px;background:#fff;border-radius:6px;border:1px solid #ccc;font-size:22px;color:#555;line-height:42px;text-align:center;white-space:nowrap;letter-spacing:-1.2px">キャンセル</div>
<div class="abs" style="left:367px;top:4px;width:144px;height:62px;border:4px solid #e9502c"></div>
<div class="abs" style="left:377px;top:12px;width:126px;height:45px;background:#ff2316;border-radius:6px;font-size:21px;color:#fff;line-height:42px;text-align:center;white-space:nowrap">保存</div>
<div class="sec" style="top:71px;height:66px;line-height:62px"><i></i><span>土地・不動産情報</span></div>
<div class="row" style="top:137px;height:135px"><div class="l">土地情報<br>の設定</div>
<div class="abs" style="left:140px;top:29px;width:19px;height:19px;border-radius:50%;border:2px solid #0b76ef;background:#fff"><div class="abs" style="left:3px;top:3px;width:9px;height:9px;border-radius:50%;background:#0b76ef"></div></div>
<div class="abs" style="left:171px;top:26px;font-size:22px;line-height:30px;color:#333;white-space:nowrap">文字入力</div>
<div class="abs" style="left:140px;top:82px;width:19px;height:19px;border-radius:50%;border:1.5px solid #767676;background:#fff"></div>
<div class="abs" style="left:171px;top:79px;font-size:22px;line-height:30px;color:#333;white-space:nowrap">土地情報を使用する</div>
</div>
<div class="row" style="top:272px;height:88px"><div class="l">住所・地<br>番</div><div class="inp" style="top:13px;width:342px">新潟県新潟市西区</div></div>
<div class="row" style="top:360px;height:80px"><div class="l">台帳面積</div><div class="inp" style="top:14px;width:268px;line-height:49px">28</div><div class="unit" style="left:416px;top:25px">a</div></div>
<div class="row" style="top:440px;height:80px"><div class="l">所有者</div><div class="inp" style="top:14px;width:342px">亜久里　一郎</div></div>
<div class="row" style="top:520px;height:89px"><div class="l">賃借料・<br>小作料</div><div class="inp" style="top:13px;width:268px;line-height:49px">10,000</div><div class="unit" style="left:417px;top:24px">円</div></div>
<div class="row" style="top:609px;height:191px;border-bottom:none"><div class="l">メモ</div><div class="inp" style="top:14px;width:342px;height:155px;color:#a2a2a2;line-height:30px;padding-top:0px">メモを入力してください。<svg class="abs" style="right:2px;bottom:2px" width="12" height="12" viewBox="0 0 12 12"><path d="M1 11L11 1M6 11l5-5" stroke="#666" stroke-width="1" fill="none"/></svg></div></div>
<div class="sec" style="top:800px;height:67px;line-height:62px"><i></i><span>緯度経度・参考面積・長さ</span></div>
<div class="row" style="top:866px;height:3px;border:none"><div class="l" style="padding:0"></div></div>

<div id="rsb" class="abs"><div class="abs" style="left:3px;top:526px;width:21px;height:202px;background:#c1c1c1"></div>
<i class="abs" style="left:7px;top:10px;border-left:6.5px solid transparent;border-right:6.5px solid transparent;border-bottom:7px solid #505050"></i>
<i class="abs" style="left:7px;top:784px;border-left:6.5px solid transparent;border-right:6.5px solid transparent;border-top:7px solid #505050"></i></div>
</div>
<!-- BOTTOM -->
<div id="bottom" class="abs"></div>
<div id="bsearch" class="abs"></div>
<div id="black" class="abs"></div>
<div class="abs" style="left:1471px;top:1065px;width:1px;height:51px;background:#ddd"></div>
<svg class="abs" style="left:697px;top:1064px" width="60" height="52" viewBox="697 1064 60 52"><circle cx="717.300" cy="1088.700" r="7.800" fill="none" stroke="#555" stroke-width="3.400"/><path d="M723 1094.400l5.600 5.600" stroke="#555" stroke-width="3.600" stroke-linecap="round"/></svg>
<div class="abs" style="left:741px;top:1073.500px;font-size:21.800px;line-height:30px;color:#a2a2a2;white-space:nowrap">住所・キーワードから検索</div>
<div class="abs" style="left:1491px;top:1073px;font-size:22px;line-height:30px;color:#333;white-space:nowrap">検索</div>

</body>
</html>
